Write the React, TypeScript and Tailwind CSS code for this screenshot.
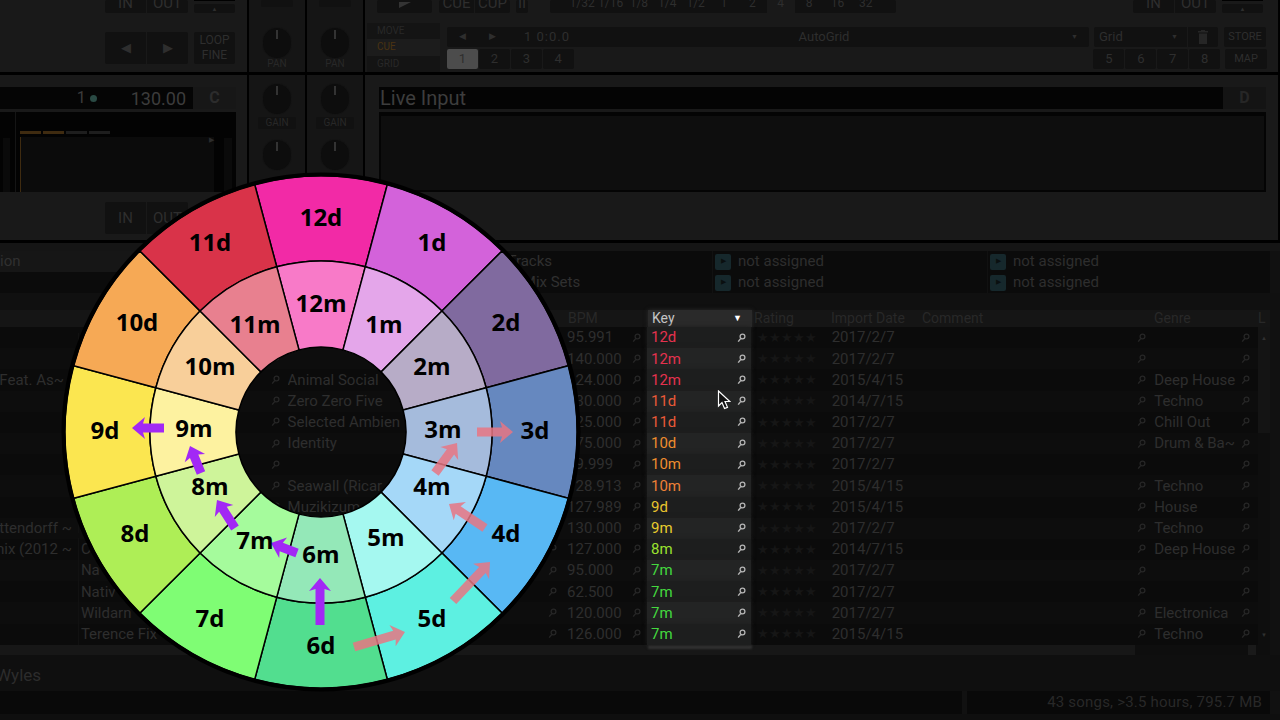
import React from "react";

const F = { fontFamily: "Roboto, 'Liberation Sans', sans-serif" };

function Btn({ className = "", bg = "bg-[#111111]", children }: { className?: string; bg?: string; children?: React.ReactNode }) {
  return (
    <div className={"flex items-center justify-center overflow-hidden rounded-[2px] text-[#2e2e2e] " + bg + " " + className}>
      {children}
    </div>
  );
}

function Mag({ c = "#262626" }: { c?: string }) {
  return (
    <svg width="9" height="10" viewBox="0 0 9 10" className="shrink-0">
      <circle cx="5.5" cy="3.5" r="2.4" fill="none" stroke={c} strokeWidth="1.3" />
      <path d="M3.8 5.4 1.2 8.6" stroke={c} strokeWidth="1.5" />
    </svg>
  );
}

function Knob({ label, chip }: { label?: string; chip?: boolean }) {
  return (
    <div className="flex flex-col items-center">
      <div className="relative h-[30px] w-[28px] rounded-full bg-[#0d0d0d] shadow-[0_0_0_1px_#141414]">
        <div className="absolute left-[13px] top-[2px] h-[9px] w-[2px] bg-[#333333]" />
      </div>
      {label && (
        <div className={"rounded-[2px] px-[7px] text-[10px] leading-[10px] text-[#282828] " + (chip ? "mt-[3px] bg-[#111111] py-[1px]" : "mt-[1px]")}>
          {label}
        </div>
      )}
    </div>
  );
}

function MixerTop() {
  return (
    <div className="flex w-[58px] flex-col items-center border-r-2 border-black bg-[#151515]">
      <Btn className="h-[7px] w-[32px]" />
      <div className="mt-[21px]">
        <Knob label="PAN" />
      </div>
    </div>
  );
}

function MixerBottom() {
  return (
    <div className="flex w-[58px] flex-col items-center border-r-2 border-black bg-[#151515] pt-[9px]">
      <Knob label="GAIN" chip />
      <div className="mt-[11px]">
        <Knob />
      </div>
    </div>
  );
}

function LeftTop() {
  return (
    <div className="flex w-[249px] flex-col border-r-2 border-black bg-[#191919] pl-[105px]">
      <div className="flex h-[28px] items-start">
        <Btn className="h-[13px] w-[41px] rounded-r-none pb-[7px] text-[15px]">IN</Btn>
        <Btn className="ml-px h-[13px] w-[41px] rounded-l-none pb-[7px] text-[15px]">OUT</Btn>
        <div className="ml-[6px] flex w-[41px] flex-col gap-[3px]">
          <div className="h-[1px] bg-black" />
          <Btn className="h-[9px] text-[6px]">▲</Btn>
        </div>
      </div>
      <div className="flex h-[37px] items-start pt-[4px]">
        <Btn className="h-[32px] w-[41px] rounded-r-none text-[13px]">◀</Btn>
        <Btn className="ml-px h-[32px] w-[41px] rounded-l-none text-[13px]">▶</Btn>
        <div className="ml-[6px] flex h-[32px] w-[41px] flex-col items-center justify-center rounded-[2px] bg-[#111111] text-[12px] leading-[15px] text-[#2e2e2e]">
          <span>LOOP</span>
          <span>FINE</span>
        </div>
      </div>
    </div>
  );
}

function RightTop() {
  const vals = ["1/32", "1/16", "1/8", "1/4", "1/2", "1", "2", "4", "8", "16", "32"];
  const n = (t: string, active?: boolean) => (
    <Btn bg={active ? "bg-[#4c4c4c]" : "bg-[#111111]"} className="h-[20px] w-[31px] text-[13px]">{t}</Btn>
  );
  return (
    <div className="flex flex-1 flex-col border-r-2 border-black bg-[#191919]">
      <div className="flex h-[23px] items-start pl-[12px] text-[15px]">
        <Btn className="h-[13px] w-[55px]">
          <svg width="20" height="10" viewBox="0 0 20 10"><path d="M4 -8 16 0 4 6z" fill="#333" /></svg>
        </Btn>
        <Btn className="ml-[7px] h-[13px] w-[35px] rounded-r-none pb-[7px]">CUE</Btn>
        <Btn className="ml-px h-[13px] w-[35px] rounded-l-none pb-[7px]">CUP</Btn>
        <Btn className="ml-[6px] h-[13px] w-[12px] pb-[7px]">II</Btn>
        <div className="ml-[22px] flex h-[13px] w-[346px] items-center rounded-[2px] bg-[#111111] pl-[18px] pr-[16px] text-[12px] text-[#2e2e2e]">
          {vals.map((v, i) => (
            <span key={v} className={"flex h-full flex-1 items-center justify-center pb-[7px] " + (i === 7 ? "bg-[#191919]" : "")}>{v}</span>
          ))}
        </div>
        <Btn className="ml-[237px] h-[13px] w-[41px] rounded-r-none pb-[7px]">IN</Btn>
        <Btn className="ml-px h-[13px] w-[41px] rounded-l-none pb-[7px]">OUT</Btn>
        <div className="ml-[6px] flex w-[41px] flex-col gap-[3px]">
          <div className="h-[1px] bg-black" />
          <Btn className="h-[9px] text-[6px]">▲</Btn>
        </div>
      </div>
      <div className="flex h-[49px]">
        <div className="ml-[2px] flex w-[73px] flex-col text-[10px] leading-[16px]">
          <div className="h-[16px] bg-[#141414] pl-[10px] text-[#282828]">MOVE</div>
          <div className="h-[17px] bg-[#1c1c1c] pl-[10px] text-[#4a3312]">CUE</div>
          <div className="h-[16px] bg-[#141414] pl-[10px] text-[#282828]">GRID</div>
        </div>
        <div className="ml-[7px] flex w-[820px] flex-col pt-[4px]">
          <div className="flex h-[20px] items-center">
            <div className="flex h-full w-[642px] items-center rounded-[2px] bg-[#111111] text-[13px] text-[#2e2e2e]">
              <span className="w-[30px] text-center text-[9px]">◀</span>
              <span className="w-[30px] text-center text-[9px]">▶</span>
              <span className="w-[70px] pl-[10px] text-center tracking-[1px]">1 0:0.0</span>
              <span className="flex-1 text-center">AutoGrid</span>
              <span className="w-[18px] text-[7px]">▼</span>
            </div>
            <div className="ml-[5px] flex h-full w-[93px] items-center rounded-l-[2px] bg-[#111111] pl-[5px] text-[13px] text-[#2e2e2e]">
              <span className="flex-1">Grid</span>
              <span className="w-[16px] text-[7px]">▼</span>
            </div>
            <Btn className="ml-px h-full w-[30px] rounded-l-none">
              <svg width="10" height="14" viewBox="0 0 10 14" fill="#262626"><path d="M3 0h4v1h3v1.5H0V1h3zM1 3.5h8V14H1z" /></svg>
            </Btn>
            <Btn className="ml-[6px] h-full w-[42px] text-[11px]">STORE</Btn>
          </div>
          <div className="mt-[2px] flex h-[20px] items-center gap-px">
            {n("1", true)}
            {n("2")}
            {n("3")}
            {n("4")}
            <div className="w-[519px]" />
            {n("5")}
            {n("6")}
            {n("7")}
            {n("8")}
            <Btn className="ml-[4px] h-full w-[42px] text-[11px]">MAP</Btn>
          </div>
        </div>
      </div>
    </div>
  );
}

function LeftBottom() {
  return (
    <div className="flex w-[249px] flex-col border-r-2 border-black bg-[#191919] pt-[12px]">
      <div className="mr-[11px] flex h-[22px] items-center justify-end bg-[#050505]">
        <span className="mr-[4px] text-[16px] text-[#3c3c3c]">1</span>
        <span className="mr-[34px] h-[7px] w-[7px] rounded-full bg-[#2a4a44]" />
        <span className="mr-[7px] text-[18px] text-[#3c3c3c]">130.00</span>
        <span className="flex h-[22px] w-[43px] items-center justify-center bg-[#171717] text-[16px] font-bold text-[#2c2c2c]">C</span>
      </div>
      <div className="mr-[11px] mt-[3px] flex h-[80px] bg-[#030303]">
        <div className="flex w-[16px] border-r border-[#151515] pl-[3px] pt-[26px]"><div className="h-[54px] w-[7px] bg-[#0a0a0a]" /></div>
        <div className="relative ml-[4px] flex w-[194px] flex-col pt-[19px]">
          <div className="flex gap-[2px]">
            <div className="h-[3px] w-[21px] bg-[#3f2b10]" />
            <div className="h-[3px] w-[21px] bg-[#3f2b10]" />
            <div className="h-[3px] w-[21px] bg-[#1e1e1e]" />
            <div className="h-[3px] w-[21px] bg-[#1e1e1e]" />
          </div>
          <div className="mt-[3px] flex-1 border-l border-[#3f2b10] bg-[#0b0b0b]" />
          <span className="absolute right-0 top-[24px] text-[7px] leading-[8px] text-[#2c2c2c]">▶</span>
        </div>
        <div className="ml-[10px] mt-[26px] h-[54px] w-[8px] bg-[#0a0a0a]" />
      </div>
      <div className="ml-[105px] mt-[10px] flex">
        <Btn className="h-[32px] w-[41px] rounded-r-none text-[15px]">IN</Btn>
        <Btn className="ml-px h-[32px] w-[41px] rounded-l-none text-[15px]">OUT</Btn>
      </div>
    </div>
  );
}

function RightBottom() {
  return (
    <div className="flex flex-1 flex-col border-r-2 border-black bg-[#191919] pl-[14px] pr-[12px] pt-[12px]">
      <div className="flex h-[22px] items-center justify-between bg-[#040404]">
        <span className="pl-[1px] text-[20px] text-[#3d3d3d]">Live Input</span>
        <span className="flex h-full w-[43px] items-center justify-center bg-[#141414] text-[16px] font-bold text-[#262626]">D</span>
      </div>
      <div className="mt-[3px] h-[80px] border-2 border-t-4 border-[#040404] bg-[#0e0e0e]" />
    </div>
  );
}

function Cell() {
  return (
    <div className="flex h-full items-center pl-[2px]">
      <span className="flex h-[16px] w-[16px] items-center justify-center rounded-[2px] bg-[#16282c] text-[7px] text-[#0a0f10]">▶</span>
      <span className="ml-[7px] text-[15px] text-[#2e2e2e]">not assigned</span>
    </div>
  );
}

function Fav({ left, lead, pad }: { left: string; lead?: string; pad: string }) {
  return (
    <div className="flex h-[21px] w-full items-center">
      <div className={"flex h-full w-[230px] items-center text-[15px] text-[#303030] " + (lead ? "bg-[#161616]" : "")}>{lead}</div>
      <div className={"flex h-full w-[482px] items-center text-[15px] text-[#303030] " + pad}>{left}</div>
      <div className="h-full w-[275px] border-l border-[#111111]"><Cell /></div>
      <div className="h-full w-[275px] border-l border-[#111111]"><Cell /></div>
    </div>
  );
}

type Row = { t?: string; pad?: boolean; a?: string; r?: string; b: string; k: string; kc: string; d: string; g?: string };
const rows: Row[] = [
  { b: "95.991", k: "12d", kc: "text-[#e5324f]", d: "2017/2/7" },
  { b: "140.000", k: "12m", kc: "text-[#e5324f]", d: "2017/2/7" },
  { t: "Feat. As~", pad: true, r: "Animal Social", b: "124.000", k: "12m", kc: "text-[#e5324f]", d: "2015/4/15", g: "Deep House" },
  { a: "s~", r: "Zero Zero Five", b: "130.000", k: "11d", kc: "text-[#ea5a38]", d: "2014/7/15", g: "Techno" },
  { r: "Selected Ambien", b: "125.000", k: "11d", kc: "text-[#ea5a38]", d: "2017/2/7", g: "Chill Out" },
  { r: "Identity", b: "175.000", k: "10d", kc: "text-[#ee8d2e]", d: "2017/2/7", g: "Drum & Ba~" },
  { b: "69.999", k: "10m", kc: "text-[#ee8d2e]", d: "2017/2/7" },
  { r: "Seawall (Ricar", b: "128.913", k: "10m", kc: "text-[#ee8036]", d: "2015/4/15", g: "Techno" },
  { r: "Muzikizum", b: "127.989", k: "9d", kc: "text-[#e8c42e]", d: "2015/4/15", g: "House" },
  { t: "ttendorff ~", b: "130.000", k: "9m", kc: "text-[#e8cc2e]", d: "2017/2/7", g: "Techno" },
  { t: "mix (2012 ~", a: "C", b: "127.000", k: "8m", kc: "text-[#9be22f]", d: "2014/7/15", g: "Deep House" },
  { a: "Na", b: "95.000", k: "7m", kc: "text-[#44d93f]", d: "2017/2/7" },
  { a: "Nativ", b: "62.500", k: "7m", kc: "text-[#44d93f]", d: "2017/2/7" },
  { a: "Wildarn", b: "120.000", k: "7m", kc: "text-[#44d93f]", d: "2017/2/7", g: "Electronica" },
  { a: "Terence Fix", b: "126.000", k: "7m", kc: "text-[#44d93f]", d: "2015/4/15", g: "Techno" },
];

function Table() {
  const dim = "text-[15px] text-[#2e2e2e]";
  return (
    <div className="flex w-[1270px] flex-col">
      <div className="relative flex h-[17px] items-center bg-[#151515] text-[14px] text-[#282828]">
        <span className="ml-[568px] w-[80px]">BPM</span>
        <div className="z-10 flex h-full w-[104px] items-center justify-between bg-[#2a2a2a] pl-[4px] pr-[10px] text-[#c4c4c4] shadow-[0_0_4px_#2a2a2a]">
          <span>Key</span>
          <span className="text-[9px] text-white">▼</span>
        </div>
        <span className="ml-[2px] w-[77px]">Rating</span>
        <span className="w-[91px]">Import Date</span>
        <span className="w-[232px]">Comment</span>
        <span className="w-[104px]">Genre</span>
        <span>L</span>
      </div>
      {rows.map((r, i) => (
        <div key={i} className={"flex h-[21.2px] items-center " + (i % 2 ? "bg-[#0d0d0d]" : "bg-[#0b0b0b]")}>
          <div className={"flex w-[78px] justify-end overflow-hidden whitespace-nowrap " + (r.pad ? "pr-[14px] " : "pr-[6px] ") + dim}>{r.t}</div>
          <div className={"flex w-[210px] items-center justify-between overflow-hidden whitespace-nowrap border-l border-[#111111] pl-[2px] pr-[8px] " + dim}>
            <span>{r.a}</span>
            <Mag />
          </div>
          <div className={"flex w-[278px] items-center justify-between overflow-hidden whitespace-nowrap pr-[8px] " + dim}>
            <span>{r.r}</span>
            <Mag />
          </div>
          <div className={"flex w-[82px] items-center justify-between pl-[2px] pr-[6px] " + dim}>
            <span>{r.b}</span>
            <Mag />
          </div>
          <div className={"z-10 flex h-full w-[104px] items-center justify-between pl-[4px] pr-[5px] text-[15px] shadow-[0_0_4px_#1e1e1e] " + r.kc + " " + (i % 2 ? "bg-[#232424]" : "bg-[#1d1e1e]")}>
            <span>{r.k}</span>
            <Mag c="#b4b4b4" />
          </div>
          <div className="ml-[6px] w-[75px] text-[13px] tracking-[0px] text-[#161616]">★★★★★</div>
          <div className={"w-[91px] " + dim}>{r.d}</div>
          <div className="flex w-[232px] justify-end pr-[8px]"><Mag /></div>
          <div className={"flex w-[98px] items-center justify-between pr-[2px] " + dim}>
            <span className="whitespace-nowrap">{r.g}</span>
            <Mag />
          </div>
          <div className={"ml-[6px] flex h-full w-[12px] items-center justify-center text-[6px] text-[#303030] " + (i < 5 ? "bg-[#141414]" : "bg-[#0e0e0e]")}>
            {i === 0 ? "▲" : i === 14 ? "▼" : ""}
          </div>
        </div>
      ))}
      <div className="relative flex h-[10px]">
        <div className="w-[1135px] bg-[#171717]" />
        <div className="flex flex-1 justify-end bg-[#0e0e0e] pr-[14px]"><div className="h-full w-[8px] bg-[#1a1a1a]" /></div>
        <div className="absolute left-[648px] top-0 h-[4px] w-[104px] bg-[#343434] blur-[1px]" />
      </div>
    </div>
  );
}

const C = { x: 321, y: 432 };
function pt(r: number, deg: number) {
  const a = ((deg - 90) * Math.PI) / 180;
  return [C.x + r * Math.cos(a), C.y + r * Math.sin(a)];
}
function seg(r0: number, r1: number, mid: number) {
  const [a, b] = pt(r1, mid - 15);
  const [c, d] = pt(r1, mid + 15);
  const [e, f] = pt(r0, mid + 15);
  const [g, h] = pt(r0, mid - 15);
  return `M${a} ${b}A${r1} ${r1} 0 0 1 ${c} ${d}L${e} ${f}A${r0} ${r0} 0 0 0 ${g} ${h}Z`;
}
function arrow(x0: number, y0: number, x1: number, y1: number) {
  const dx = x1 - x0;
  const dy = y1 - y0;
  const l = Math.hypot(dx, dy);
  const ux = dx / l;
  const uy = dy / l;
  const nx = -uy;
  const ny = ux;
  const hl = 13;
  const sw = 4.5;
  const hw = 11;
  const P = (a: number, b: number) => `${x0 + ux * a + nx * b},${y0 + uy * a + ny * b}`;
  return [P(0, -sw), P(l - hl + 2, -sw), P(l - hl, -hw), P(l, 0), P(l - hl, hw), P(l - hl + 2, sw), P(0, sw)].join(" ");
}

const outerC = ["#f22aa6", "#d362da", "#806a9f", "#6688bf", "#58b8f4", "#5df0e1", "#52de8f", "#7ffd74", "#aeee56", "#fbe650", "#f6a955", "#d93349"];
const innerC = ["#f87ac8", "#e4a6ea", "#b7acc7", "#a5bbdc", "#a5d8f8", "#a5f8f0", "#94e8b8", "#a5fb9c", "#cef49a", "#fdf2a0", "#f8cf9a", "#e8808f"];
const outerL: [string, number, number][] = [
  ["12d", 321, 217], ["1d", 432, 242], ["2d", 506, 322], ["3d", 535, 430], ["4d", 506, 533], ["5d", 432, 618],
  ["6d", 321, 645], ["7d", 210, 618], ["8d", 135, 533], ["9d", 105, 430], ["10d", 137, 322], ["11d", 210, 242],
];
const innerL: [string, number, number][] = [
  ["12m", 321, 303], ["1m", 384, 324], ["2m", 432, 366], ["3m", 443, 429], ["4m", 432, 486], ["5m", 386, 537],
  ["6m", 321, 554], ["7m", 255, 540], ["8m", 210, 486], ["9m", 194, 428], ["10m", 210, 366], ["11m", 255, 324],
];
const purple = [[164, 428, 132, 428], [201, 473, 190, 446], [235, 528, 217, 500], [297, 553, 271, 543], [320, 625, 320, 578]];
const pink = [[354, 647, 405, 632], [453, 601, 490, 562], [485, 528, 449, 504], [435, 473, 457, 443], [477, 432, 513, 432]];

function Wheel() {
  return (
    <svg width="1280" height="720" viewBox="0 0 1280 720" className="absolute left-0 top-0 z-20">
      {outerC.map((c, i) => (
        <path key={i} d={seg(171, 256, i * 30)} fill={c} stroke="#000" strokeWidth="1.5" />
      ))}
      {innerC.map((c, i) => (
        <path key={i} d={seg(85, 171, i * 30)} fill={c} stroke="#000" strokeWidth="1.5" />
      ))}
      <circle cx={C.x} cy={C.y} r="257.5" fill="none" stroke="#000" strokeWidth="4" />
      {purple.map((a, i) => (
        <polygon key={i} points={arrow(a[0], a[1], a[2], a[3])} fill="#a228f5" />
      ))}
      {pink.map((a, i) => (
        <polygon key={i} points={arrow(a[0], a[1], a[2], a[3])} fill="#e87582" fillOpacity="0.85" />
      ))}
      {[...outerL, ...innerL].map(([t, x, y]) => (
        <text key={t} x={x} y={y + 8.5} textAnchor="middle" fontSize="24" fontWeight="700" fill="#000" style={{ fontFamily: "'Open Sans', sans-serif" }}>
          {t}
        </text>
      ))}
    </svg>
  );
}

export default function App() {
  return (
    <div className="relative flex h-[720px] w-[1280px] flex-col overflow-hidden bg-[#111111]" style={F}>
      <div className="flex h-[75px] shrink-0 border-b-[3px] border-black">
        <LeftTop />
        <MixerTop />
        <MixerTop />
        <RightTop />
      </div>
      <div className="flex h-[168px] shrink-0 border-b-[3px] border-black">
        <LeftBottom />
        <MixerBottom />
        <MixerBottom />
        <RightBottom />
      </div>
      <div className="h-[8px] shrink-0 bg-[#151515]" />
      <div className="flex h-[42px] w-[1270px] shrink-0 flex-col bg-[#0b0b0b]">
        <Fav left="All Tracks" lead="ion" pad="pl-[257px]" />
        <Fav left="All Mix Sets" pad="pl-[272px]" />
      </div>
      <div className="h-[17px] shrink-0 bg-[#101010]" />
      <Table />
      <div className="flex h-[36px] shrink-0 items-center bg-[#0f0f0f] pt-[5px] text-[17px] text-[#2c2c2c]">
        <span className="-ml-[4px]">Wyles</span>
      </div>
      <div className="flex h-[23px] shrink-0 gap-[5px] pr-[10px]">
        <div className="w-[962px] bg-[#090909]" />
        <div className="flex flex-1 items-center justify-end bg-[#090909] pr-[8px] text-[15px] tracking-[0.2px] text-[#282828]">43 songs, &gt;3.5 hours, 795.7 MB</div>
      </div>
      <div className="flex-1 bg-[#0f0f0f]" />
      <Wheel />
      <svg width="14" height="20" viewBox="0 0 14 20" className="absolute left-[717px] top-[390px] z-30">
        <path d="M1.5 1 1.5 16 5 12.5 7.5 18.5 10.5 17.3 8 11.5 12.8 11.5Z" fill="#111" stroke="#fff" strokeWidth="1.2" />
      </svg>
    </div>
  );
}
